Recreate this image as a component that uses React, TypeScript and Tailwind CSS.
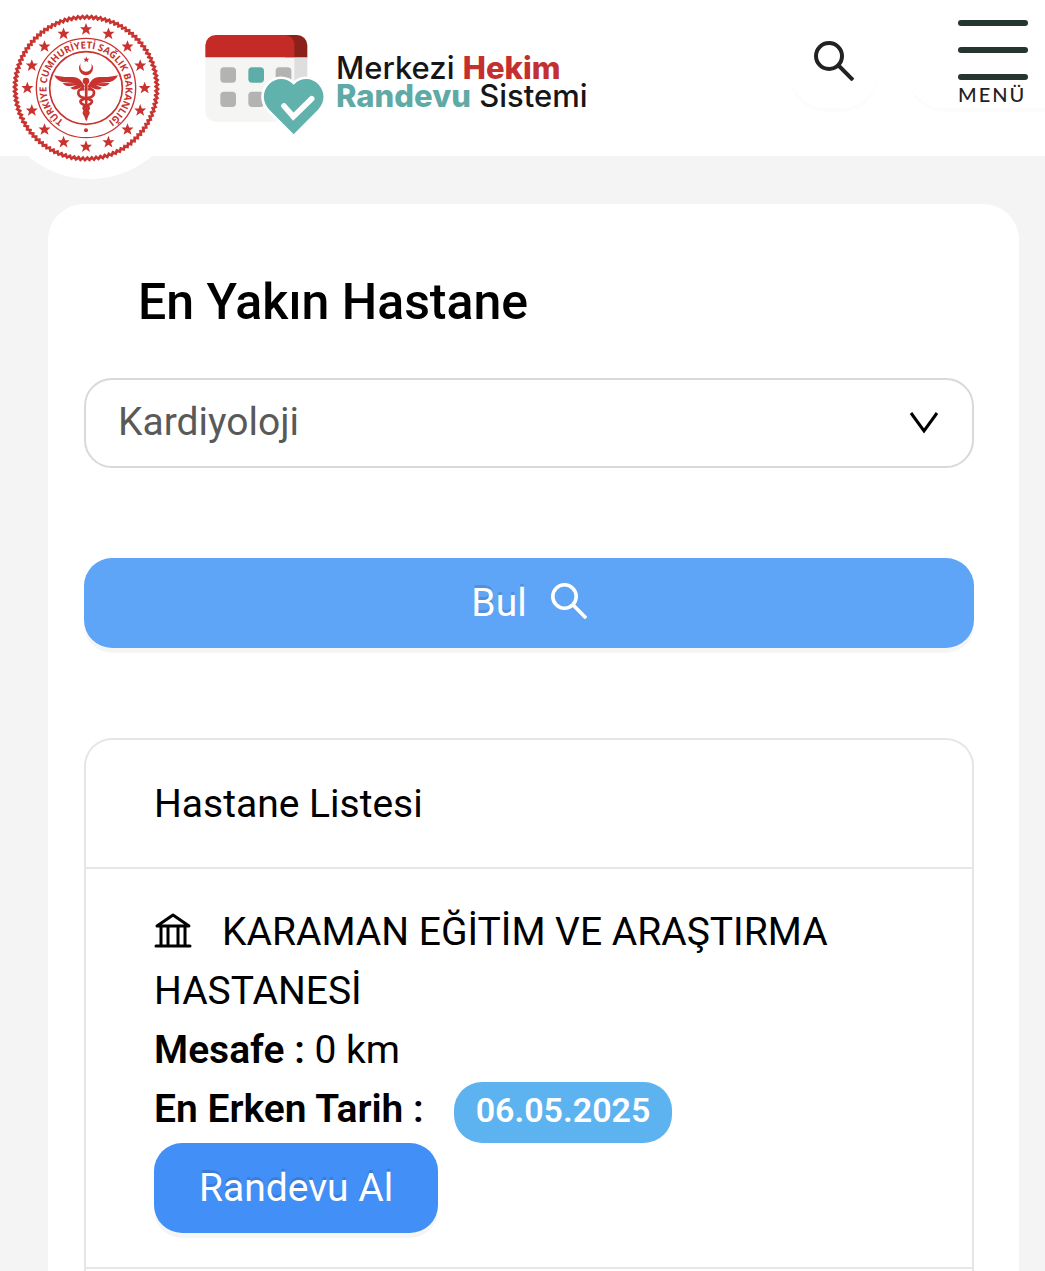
import type { ReactNode } from "react";

const STAR_POINTS = "0,-19 5,-6 18,-6 8,3 12,16 0,8 -12,16 -8,3 -18,-6 -5,-6";
const STAR_ANGLES = Array.from({ length: 16 }, (_, i) => i * 22.5);
const ROPE_ANGLES = Array.from({ length: 100 }, (_, i) => i * 3.6);

function Wing() {
  return (
    <path d="M246 246c-8-12-18-15-32-15-18 1-34-1-51-5 5 11 13 17 24 20l38 4-37-1c5 7 12 9 20 10l22-3-19 7c5 5 12 6 19 5l15-6-11 9c8 3 17-3 20-12z" />
  );
}

function MinistryEmblem() {
  return (
    <svg viewBox="0 0 540 570" className="h-[190px] w-[180px]" role="img" aria-label="Sağlık Bakanlığı">
      <circle cx="270" cy="252" r="285" fill="#fff" />
      <g fill="none" stroke="#c8322f">
        <circle cx="258" cy="264" r="213" strokeWidth="5" />
        {ROPE_ANGLES.map((angle) => (
          <path key={angle} d="M251 58l13-13" strokeWidth="8" transform={`rotate(${angle} 258 264)`} />
        ))}
        <circle cx="258" cy="264" r="149" strokeWidth="4" />
        <circle cx="258" cy="264" r="109" strokeWidth="5" />
      </g>
      <g fill="#c8322f">
        {STAR_ANGLES.map((angle) => (
          <polygon
            key={angle}
            points={STAR_POINTS}
            transform={`rotate(${angle} 258 264) translate(258 88) rotate(${-angle})`}
          />
        ))}
        <circle cx="258" cy="391" r="6" />
        <polygon points={STAR_POINTS} transform="translate(259 179) scale(0.5)" />
        <path d="M243 190a21 21 0 1 0 30 0 17 17 0 1 1-30 0z" />
        <circle cx="258" cy="243" r="10" />
        <path d="M254 250h9l-1 108-3 6-3-6z" />
        <Wing />
        <g transform="translate(517 0) scale(-1 1)">
          <Wing />
        </g>
      </g>
      <g fill="none" stroke="#c8322f" strokeWidth="8" strokeLinecap="round">
        <path d="M250 268c-20-3-20 20-1 25 22 5 32 8 24 17-7 8-25 6-22 16 2 8 17 6 14 14l-7 12" />
        <path d="M267 268c20-3 20 20 1 25-22 5-32 8-24 17 7 8 25 6 22 16-2 8-17 6-14 14l7 12" />
      </g>
      <path id="emblem-ring" d="M190 362A119 119 0 1 1 326 362" fill="none" />
      <text fill="#c8322f" fontSize="29" fontWeight="700" fontFamily="'Open Sans', sans-serif">
        <textPath href="#emblem-ring" startOffset="50%" textAnchor="middle">
          TÜRKİYE CUMHURİYETİ SAĞLIK BAKANLIĞI
        </textPath>
      </text>
    </svg>
  );
}

function CalendarLogo() {
  return (
    <svg viewBox="0 0 399 375" className="h-[125px] w-[133px] shrink-0" aria-hidden="true">
      <path d="M31 110h306v165a30 30 0 0 1-30 30H61a30 30 0 0 1-30-30z" fill="#f5f5f4" />
      <path d="M298 110h39v90h-39z" fill="#dedede" />
      <path d="M270 45h36a31 31 0 0 1 31 31v36h-67z" fill="#8c211c" />
      <path d="M62 45h208a28 28 0 0 1 28 28v39H31V76a31 31 0 0 1 31-31z" fill="#c42b26" />
      <g fill="#b3b3b3">
        <rect x="76" y="142" width="47" height="46" rx="11" />
        <rect x="242" y="142" width="47" height="46" rx="11" />
        <rect x="76" y="215" width="47" height="46" rx="11" />
        <rect x="160" y="215" width="47" height="46" rx="11" />
      </g>
      <rect x="160" y="142" width="47" height="46" rx="11" fill="#5fada8" />
      <path
        d="M296 343l-73-74c-49-52 22-125 73-75 51-50 122 23 73 75z"
        fill="#61b2ac"
        stroke="#fff"
        strokeWidth="16"
        paintOrder="stroke"
      />
      <path
        d="M267 258l28 32 55-54"
        fill="none"
        stroke="#fff"
        strokeWidth="17"
        strokeLinecap="round"
      />
    </svg>
  );
}

function SearchIcon({ className }: { className: string }) {
  return (
    <svg viewBox="0 0 40 40" className={className} fill="none" stroke="currentColor" aria-hidden="true">
      <circle cx="15" cy="15" r="13" strokeWidth="4" />
      <path d="M24 24l15 15" strokeWidth="4" />
    </svg>
  );
}

function BankIcon() {
  return (
    <svg viewBox="0 0 36 36" className="mr-[30px] inline-block h-9 w-[38px] align-[-3px]" fill="none" stroke="currentColor" aria-hidden="true">
      <path d="M2 14L18 3l16 11z" strokeWidth="3" strokeLinejoin="round" />
      <path d="M6 14v19M13 14v19M23 14v19M30 14v19" strokeWidth="3" />
      <path d="M1 34h34" strokeWidth="3" strokeLinecap="round" />
    </svg>
  );
}

function Header() {
  return (
    <header className="relative z-10 flex h-[156px] items-start bg-white">
      <a href="#" className="shrink-0">
        <MinistryEmblem />
      </a>
      <a href="#" className="ml-[15px] mt-5 flex items-start">
        <CalendarLogo />
        <span className="ml-2 mt-[34px] whitespace-nowrap text-[31px] font-medium leading-[28px] text-[#161616]">
          <span className="block">
            Merkezi <b className="font-extrabold text-[#c3302f]">Hekim</b>
          </span>
          <span className="block">
            <b className="font-extrabold text-[#5faaa6]">Randevu</b> Sistemi
          </span>
        </span>
      </a>
      <button
        type="button"
        aria-label="Ara"
        className="ml-auto flex h-[108px] w-[88px] shrink-0 justify-center rounded-b-[36px] pt-[41px] text-[#222] shadow-[0_4px_0_rgba(0,0,0,0.01)]"
      >
        <SearchIcon className="size-10" />
      </button>
      <button
        type="button"
        className="ml-[30px] flex h-[108px] w-[137px] shrink-0 flex-col items-end rounded-bl-[36px] pr-[17px] pt-5 shadow-[0_4px_0_rgba(0,0,0,0.01)]"
      >
        <span className="flex w-[70px] flex-col gap-[21px]">
          <span className="h-1.5 rounded-full bg-[#243532]" />
          <span className="h-1.5 rounded-full bg-[#243532]" />
          <span className="h-1.5 rounded-full bg-[#243532]" />
        </span>
        <span className="w-[70px] text-left font-[Lato,sans-serif] text-[20px] font-medium leading-7 tracking-widest text-[#222]">
          MENÜ
        </span>
      </button>
    </header>
  );
}

function Label({ children }: { children: ReactNode }) {
  return <strong className="font-semibold">{children}</strong>;
}

function HospitalItem() {
  return (
    <li className="border-b-2 border-[#e6e6e6] px-[68px] py-[34px] leading-[59px]">
      <p>
        <BankIcon />
        KARAMAN EĞİTİM VE ARAŞTIRMA HASTANESİ
      </p>
      <p>
        <Label>Mesafe :</Label> 0 km
      </p>
      <div className="flex h-[63px] gap-[30px]">
        <Label>En Erken Tarih :</Label>
        <span className="flex h-[61px] items-center self-end rounded-[28px] bg-[#5cb3f0] px-[22px] pb-1 text-[34px] font-semibold text-white">
          06.05.2025
        </span>
      </div>
      <button
        type="button"
        className="block h-[90px] rounded-[28px] bg-[#438ff8] px-[45px] text-white shadow-[0_5px_0_rgba(0,0,0,0.04)] [text-shadow:0_-3px_0_rgba(0,0,0,0.12)]"
      >
        Randevu Al
      </button>
    </li>
  );
}

export default function App() {
  return (
    <div className="flex min-h-screen flex-col bg-[#f4f4f4] font-[Inter,sans-serif] text-black">
      <Header />
      <main className="ml-12 mr-[26px] mt-12 flex flex-1 flex-col rounded-t-[36px] bg-white pl-9 pr-[45px] pt-[68px] font-[Roboto,sans-serif] text-[39px]">
        <h1 className="ml-[54px] text-[50px] font-medium leading-[60px]">En Yakın Hastane</h1>

        <div className="relative mt-[46px]">
          <select
            aria-label="Klinik"
            className="h-[90px] w-full appearance-none rounded-[28px] border-2 border-[#d9d9d9] bg-white pb-0.5 pl-8 pr-20 text-[#595959]"
          >
            <option>Kardiyoloji</option>
          </select>
          <svg
            viewBox="0 0 30 22"
            className="pointer-events-none absolute right-[35px] top-[34px] h-[22px] w-[30px]"
            aria-hidden="true"
          >
            <path d="M2 1l13 18L28 1" fill="none" stroke="#000" strokeWidth="3" />
          </svg>
        </div>

        <button
          type="button"
          className="mt-[90px] flex h-[90px] w-full items-center justify-center gap-6 rounded-[28px] bg-[#5ea5f7] text-white shadow-[0_5px_0_rgba(0,0,0,0.04)] [text-shadow:0_-3px_0_rgba(0,0,0,0.12)]"
        >
          Bul
          <SearchIcon className="mb-1 size-9" />
        </button>

        <section className="mt-[90px] flex-1 rounded-t-[28px] border-2 border-b-0 border-[#e6e6e6]">
          <h2 className="border-b-2 border-[#e6e6e6] px-[68px] pb-[33px] pt-[35px] leading-[59px]">Hastane Listesi</h2>
          <ul>
            <HospitalItem />
          </ul>
        </section>
      </main>
    </div>
  );
}
